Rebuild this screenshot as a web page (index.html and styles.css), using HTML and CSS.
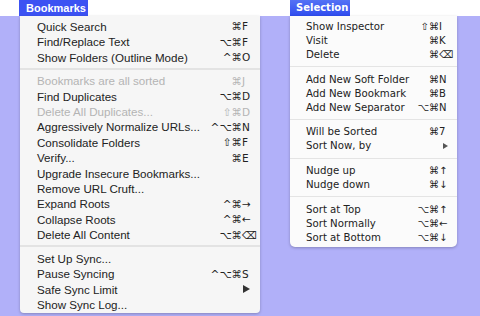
FILE: index.html
```html
<!DOCTYPE html>
<html lang="en">
<head>
<meta charset="UTF-8" />
<title>Bookmarks menus</title>
<link rel="stylesheet" href="styles.css">
</head>
<body>
<div class="menubar">
    <span class="title title-bookmarks">Bookmarks</span>
    <span class="title title-selection">Selection</span>
</div>
<div class="menus">
    <ul class="menu menu-bookmarks">
        <li><span class="label">Quick Search</span><span class="mods">⌘</span><span class="key">F</span></li>
        <li><span class="label">Find/Replace Text</span><span class="mods">⌥⌘</span><span class="key">F</span></li>
        <li><span class="label">Show Folders (Outline Mode)</span><span class="mods">^⌘</span><span class="key">O</span></li>
        <li class="sep"></li>
        <li class="off"><span class="label">Bookmarks are all sorted</span><span class="mods">⌘</span><span class="key">J</span></li>
        <li><span class="label">Find Duplicates</span><span class="mods">⌥⌘</span><span class="key">D</span></li>
        <li class="off"><span class="label">Delete All Duplicates...</span><span class="mods">⇧⌘</span><span class="key">D</span></li>
        <li><span class="label">Aggressively Normalize URLs...</span><span class="mods">^⌥⌘</span><span class="key">N</span></li>
        <li><span class="label">Consolidate Folders</span><span class="mods">⇧⌘</span><span class="key">F</span></li>
        <li><span class="label">Verify...</span><span class="mods">⌘</span><span class="key">E</span></li>
        <li><span class="label">Upgrade Insecure Bookmarks...</span></li>
        <li><span class="label">Remove URL Cruft...</span></li>
        <li><span class="label">Expand Roots</span><span class="mods">^⌘</span><span class="key">→</span></li>
        <li><span class="label">Collapse Roots</span><span class="mods">^⌘</span><span class="key">←</span></li>
        <li><span class="label">Delete All Content</span><span class="mods">⌥⌘</span><span class="key">⌫</span></li>
        <li class="sep"></li>
        <li><span class="label">Set Up Sync...</span></li>
        <li><span class="label">Pause Syncing</span><span class="mods">^⌥⌘</span><span class="key">S</span></li>
        <li><span class="label">Safe Sync Limit</span><span class="key"><span class="arrow"></span></span></li>
        <li><span class="label">Show Sync Log...</span></li>
    </ul>
    <ul class="menu menu-selection">
        <li><span class="label">Show Inspector</span><span class="mods">⇧⌘</span><span class="key">I</span></li>
        <li><span class="label">Visit</span><span class="mods">⌘</span><span class="key">K</span></li>
        <li><span class="label">Delete</span><span class="mods">⌘</span><span class="key">⌫</span></li>
        <li class="sep"></li>
        <li><span class="label">Add New Soft Folder</span><span class="mods">⌘</span><span class="key">N</span></li>
        <li><span class="label">Add New Bookmark</span><span class="mods">⌘</span><span class="key">B</span></li>
        <li><span class="label">Add New Separator</span><span class="mods">⌥⌘</span><span class="key">N</span></li>
        <li class="sep"></li>
        <li><span class="label">Will be Sorted</span><span class="mods">⌘</span><span class="key">7</span></li>
        <li><span class="label">Sort Now, by</span><span class="key"><span class="arrow"></span></span></li>
        <li class="sep"></li>
        <li><span class="label">Nudge up</span><span class="mods">⌘</span><span class="key">↑</span></li>
        <li><span class="label">Nudge down</span><span class="mods">⌘</span><span class="key">↓</span></li>
        <li class="sep"></li>
        <li><span class="label">Sort at Top</span><span class="mods">⌥⌘</span><span class="key">↑</span></li>
        <li><span class="label">Sort Normally</span><span class="mods">⌥⌘</span><span class="key">←</span></li>
        <li><span class="label">Sort at Bottom</span><span class="mods">⌥⌘</span><span class="key">↓</span></li>
    </ul>
</div>
</body>
</html>
```

FILE: styles.css
```css
body {
    margin: 0;
    background-color: #b1b0f9;
    font-family: 'Liberation Sans', Arial, sans-serif;
    color: #222;
    height: 316px;
    overflow: hidden;
}
.menubar {
    display: flex;
    height: 16px;
    background-color: #fff;
}
.title {
    height: 16px;
    line-height: 16px;
    color: #fff;
    font-weight: 700;
    font-size: 11px;
}
.title-bookmarks {
    margin-left: 19px;
    width: 69px;
    padding-left: 7px;
    box-sizing: border-box;
    background-color: #3c52f3;
}
.title-selection {
    margin-left: 202px;
    width: 60px;
    padding-left: 6px;
    box-sizing: border-box;
    background: linear-gradient(#5472f5, #2f4cef);
    font-family: 'DejaVu Sans', sans-serif;
    font-size: 10px;
}
.menus {
    display: flex;
    align-items: flex-start;
}
.menu {
    list-style: none;
    margin: 0;
    padding: 0;
    box-shadow: 0 1px 3px rgba(0,0,0,0.25);
}
.menu li {
    display: flex;
    align-items: center;
    white-space: nowrap;
}
.menu .label {
    flex: 1;
}
.menu .mods {
    text-align: right;
    font-family: 'DejaVu Sans', sans-serif;
}
.menu .key {
    display: flex;
    align-items: center;
    width: 14px;
    font-family: 'DejaVu Sans', sans-serif;
}
.menu .off {
    color: #b4b4b4;
}
.arrow {
    width: 0;
    height: 0;
    border-top: 4px solid transparent;
    border-bottom: 4px solid transparent;
    border-left: 7px solid #333;
    margin-left: 1px;
}

.menu-bookmarks {
    margin-left: 20px;
    width: 240px;
    padding: 2.6px 0 0.7px;
    background-color: #f6f6f6;
    border-radius: 0 0 4px 4px;
    font-size: 11.6px;
}
.menu-bookmarks li {
    height: 15.4px;
    padding: 0 4px 0 17px;
}
.menu-bookmarks .mods,
.menu-bookmarks .key {
    font-size: 10.5px;
}
.menu-bookmarks .sep {
    height: 2px;
    margin: 3px 0 3.3px;
    padding: 0;
    background-color: #e3e3e3;
}

.menu-selection {
    margin-left: 30px;
    width: 167px;
    padding: 3.4px 0 3px;
    background-color: #fbfbfb;
    border-radius: 0 0 5px 5px;
    font-family: 'DejaVu Sans', sans-serif;
    font-size: 10.2px;
}
.menu-selection li {
    height: 14px;
    padding: 0 4px 0 16px;
}
.menu-selection .mods,
.menu-selection .key {
    font-size: 10px;
}
.menu-selection .sep {
    height: 1px;
    margin: 4.9px 0 4.8px;
    padding: 0;
    background-color: #e4e4e4;
}
.menu-selection .arrow {
    border-top-width: 3px;
    border-bottom-width: 3px;
    border-left-width: 5px;
    border-left-color: #555;
    margin-left: 4px;
}
```
